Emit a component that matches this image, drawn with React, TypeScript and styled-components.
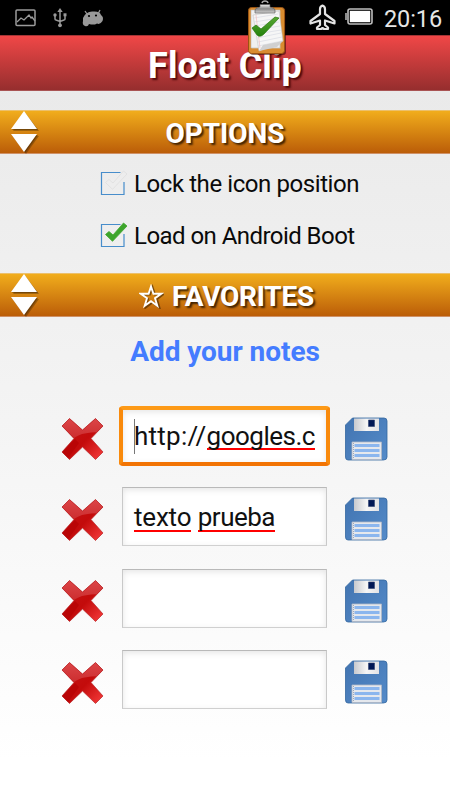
import React from 'react';
import styled, { createGlobalStyle } from 'styled-components';

const GlobalStyle = createGlobalStyle`
  * { box-sizing: border-box; }
  body { margin: 0; font-family: Roboto, "Liberation Sans", sans-serif; }
`;

const Screen = styled.div`
  width: 450px;
  height: 800px;
  display: flex;
  flex-direction: column;
  overflow: hidden;
  background: linear-gradient(#e9e9e9 0, #eaeaea 91px, #f4f4f4 420px, #ffffff 760px);
`;

const StatusBar = styled.header`
  height: 35px;
  flex: none;
  display: flex;
  align-items: flex-start;
  background: #000;
  position: relative;
  svg { flex: none; }
`;

const StatusIcon = styled.svg<{ $gap: number; $top: number }>`
  margin-left: ${p => p.$gap}px;
  margin-top: ${p => p.$top}px;
`;

const Clock = styled.time`
  margin-left: 10px;
  margin-top: 5px;
  font-size: 23.5px;
  line-height: 28px;
  letter-spacing: -0.1px;
  color: #e6e6e6;
  white-space: nowrap;
`;

const FloatingClip = styled.svg`
  position: absolute;
  left: 247px;
  top: 0;
  z-index: 2;
`;

const TitleBar = styled.div`
  height: 56px;
  flex: none;
  display: flex;
  justify-content: center;
  background: linear-gradient(#f04747, #962e2e);
  border-top: 1px solid #a33536;
  border-bottom: 1px solid #a95454;
`;

const Title = styled.h1`
  margin: 0;
  font-size: 36px;
  line-height: 60px;
  letter-spacing: 0.1px;
  color: #fff;
  text-shadow: 2px 2px 2px rgba(60, 0, 0, 0.85);
  white-space: nowrap;
`;

const SectionBar = styled.div<{ $gap: number }>`
  margin-top: ${p => p.$gap}px;
  height: 44px;
  flex: none;
  display: grid;
  grid-template-columns: 50px 350px 50px;
  background: linear-gradient(#f1ad1c, #bb5d08);
  border-top: 1px solid #ecc06c;
  border-bottom: 1px solid #cf9167;
`;

const SectionTitle = styled.h2<{ $spacing: number; $shift?: number }>`
  margin: 0;
  padding-left: ${p => p.$shift ?? 0}px;
  display: flex;
  justify-content: center;
  align-items: center;
  gap: 8px;
  font-size: 28px;
  line-height: 45px;
  letter-spacing: ${p => p.$spacing}px;
  color: #fff;
  text-shadow: 2px 2px 2px rgba(50, 25, 0, 0.9);
  white-space: nowrap;
`;

const OptionList = styled.div`
  height: 119px;
  flex: none;
  padding: 4px 0 0 100px;
  display: flex;
  flex-direction: column;
`;

const Option = styled.label`
  height: 52px;
  display: flex;
  align-items: center;
  gap: 5px;
  svg { margin-top: -4px; }
`;

const OptionText = styled.span<{ $spacing: number }>`
  font-size: 24px;
  line-height: 53px;
  letter-spacing: ${p => p.$spacing}px;
  color: #0a0a0a;
  white-space: nowrap;
`;

const NotesHeading = styled.h3`
  margin: 0;
  height: 89px;
  flex: none;
  text-align: center;
  font-size: 28px;
  line-height: 69px;
  letter-spacing: -0.05px;
  color: #447cff;
`;

const Notes = styled.div`
  display: flex;
  flex-direction: column;
  gap: 22.4px;
`;

const NoteRow = styled.div`
  height: 59px;
  display: grid;
  grid-template-columns: 43px 211px 45px;
  column-gap: 15px;
  align-items: center;
  padding-left: 61px;
  > svg { margin-top: 6px; }
  > svg:last-child { margin: 5px 0 0 -1px; }
`;

const NoteField = styled.div<{ $focused?: boolean }>`
  width: ${p => (p.$focused ? 211 : 205)}px;
  margin-left: ${p => (p.$focused ? 0 : 3)}px;
  height: ${p => (p.$focused ? 60 : 59)}px;
  padding-left: 11px;
  display: flex;
  align-items: center;
  border: ${p => (p.$focused ? '4px solid #f98a0c' : '1px solid #c9c9c9')};
  border-top-color: ${p => (p.$focused ? '#fd9a17' : '#b9b9b9')};
  border-bottom-color: ${p => (p.$focused ? '#f27404' : '#d0d0d0')};
  border-radius: ${p => (p.$focused ? 4 : 0)}px;
  background: #fff;
  box-shadow: inset 0 2px 6px rgba(0, 0, 0, 0.1);
  font-size: 26px;
  color: #111;
  white-space: pre;
  overflow: hidden;
`;

const Caret = styled.span`
  width: 1px;
  height: 35px;
  margin-right: -1px;
  background: #777;
  flex: none;
`;

const NoteText = styled.span<{ $spacing: number }>`
  letter-spacing: ${p => p.$spacing}px;
  line-height: 34px;
`;

const Misspelled = styled.span<{ $spacing: number; $drop: number }>`
  display: inline-block;
  height: 34px;
  letter-spacing: ${p => p.$spacing}px;
  background: linear-gradient(#f00, #f00) 0 ${p => p.$drop}px / 100% 2.4px no-repeat;
`;

const Sorter = () => (
  <svg width="50" height="43" viewBox="0 0 50 43">
    <g fill="#3a2204" opacity=".35">
      <path d="M26 3 39 20H13Z" /><path d="M13 25H39L26 43Z" />
    </g>
    <g fill="#4a2a04" opacity=".5">
      <path d="M25 2 38 19H12Z" /><path d="M12 24H38L25 42Z" />
    </g>
    <path d="M24 0 37 18H11Z M11 23H37L24 41Z" fill="#fff" />
  </svg>
);

const Check = ({ on }: { on?: boolean }) => (
  <svg width="29" height="30" viewBox="0 0 29 30">
    <path d="M20.500 5.500H1.500V27.500H24V15" fill="none" stroke="#478dcb" strokeWidth="1.200" />
    <path
      d="M5.500 15.500 9 12.500 13 16 23.500 4 27 7 12.500 22.300Z"
      fill={on ? '#3da52c' : '#ededed'}
      stroke={on ? '#3da52c' : '#dedede'}
      strokeWidth=".8"
    />
  </svg>
);

const crossOutline =
  'M8.500 1.500 21.500 13 34.500 1.500 42 9 30 21.500 42 35 34.500 42.500 21.500 30 8.500 42.500 1 35 13 21.500 1 9Z';

const Cross = () => (
  <svg width="43" height="44" viewBox="0 0 43 44">
    <defs>
      <linearGradient id="crossBase" x1="0" y1="0" x2="1" y2="1">
        <stop offset="0" stopColor="#c51618" /><stop offset=".55" stopColor="#c30b0b" /><stop offset="1" stopColor="#fb4141" />
      </linearGradient>
      <linearGradient id="crossShine" x1="0" y1="0" x2="0" y2="1">
        <stop offset="0" stopColor="#dd4749" /><stop offset="1" stopColor="#c9292b" />
      </linearGradient>
      <clipPath id="crossShape"><path d={crossOutline} /></clipPath>
    </defs>
    <g clipPath="url(#crossShape)">
      <path d="M0 0H43V44H0Z" fill="url(#crossBase)" />
      <path d="M0 0H43V15Q29 15 21 17 12 20 10 25L0 18Z" fill="url(#crossShine)" />
      <path d="M0 36 14 22 18 26 5 44Z" fill="#b90506" />
    </g>
    <path d={crossOutline} fill="none" stroke="#b82426" strokeWidth=".7" />
  </svg>
);

const Floppy = () => (
  <svg width="45" height="44" viewBox="0 0 45 44">
    <defs>
      <linearGradient id="diskBody" x1="0" y1="0" x2="1" y2="1">
        <stop offset="0" stopColor="#4274b1" /><stop offset="1" stopColor="#548bc9" />
      </linearGradient>
      <linearGradient id="diskMetal" x1="0" y1="0" x2="1" y2="0">
        <stop offset="0" stopColor="#c7c9ce" /><stop offset=".5" stopColor="#f5f5f5" /><stop offset="1" stopColor="#e2e2e5" />
      </linearGradient>
    </defs>
    <path d="M8.500 1H40Q43 1 43 4V40Q43 43 39.500 43H4Q1.500 43 1.500 40V8Z" fill="url(#diskBody)" stroke="#34679f" strokeWidth=".8" />
    <path d="M10 1.500H35V14H10Z" fill="url(#diskMetal)" />
    <path d="M24.500 3H30.500V9.500H24.500Z" fill="#001755" stroke="#2d416f" strokeWidth=".6" />
    <path d="M8 25H37.500V42.500H8Z" fill="#e5e8ed" stroke="#b0b8c5" strokeWidth=".8" />
    <path d="M10.500 28.500H35.500M10.500 33.500H35.500M10.500 38.500H35.500" stroke="#8bb6ee" strokeWidth="2.800" />
    <path d="M9.500 26V42" stroke="#9da7b8" strokeDasharray="1 1" />
  </svg>
);

const Star = () => (
  <svg width="25" height="25" viewBox="0 0 25 25">
    <path d="M13.500 3 16 10.500H24L18 15.200 20.400 23.500 13.500 18.500 6.700 23.500 9 15.200 3 10.500H11Z" fill="none" stroke="#4a2a04" strokeWidth="2" opacity=".65" />
    <path d="M12 2.500 14.400 9.700H22.300L16 14.200 18.300 21.800 12 17.200 5.700 21.800 8 14.200 1.700 9.700H9.600Z" fill="none" stroke="#fff" strokeWidth="1.900" />
  </svg>
);

const Clipboard = () => (
  <FloatingClip width="40" height="56" viewBox="0 0 40 56">
    <defs>
      <linearGradient id="clipMetal" x1="0" y1="0" x2="0" y2="1">
        <stop offset="0" stopColor="#efefef" /><stop offset=".5" stopColor="#888" /><stop offset="1" stopColor="#d2d2d2" />
      </linearGradient>
      <linearGradient id="tick" x1="0" y1="0" x2="0" y2="1">
        <stop offset="0" stopColor="#58a833" /><stop offset="1" stopColor="#23820c" />
      </linearGradient>
    </defs>
    <rect x="3" y="8" width="36" height="47" rx="3" fill="#200" opacity=".5" />
    <rect x="1.500" y="7.500" width="36" height="46" rx="3" fill="#d98c30" stroke="#9a5412" />
    <path d="M5 11H34V49H5Z" fill="#df9c48" />
    <path d="M4 10H33V48H4Z" fill="#f0f0f0" stroke="#bbb" strokeWidth=".6" />
    <path d="M6 15 32 11 36 41 12 51Z" fill="#f6f6f6" stroke="#c5c5c5" strokeWidth=".6" />
    <path d="M7 18 31 14M7 22 32 18M8 26 32 22M8 30 33 26M9 34 34 30M10 38 34 33M11 42 35 37M11 46 35 41" stroke="#dcdee6" strokeWidth=".8" />
    <path d="M9 15 13 48" stroke="#efbcbe" strokeWidth=".7" />
    <path d="M12 51 16 45 36 41 30 47Z" fill="#d0d0d0" />
    <path d="M8 13V10Q8 8 13 7V4.500H23V7Q28 8 28 10V13Z" fill="url(#clipMetal)" stroke="#555" strokeWidth=".6" />
    <path d="M15 3Q15.500 1 18 1T21 3" fill="none" stroke="#aaa" strokeWidth="1.600" />
    <path d="M5 28 9 25 14 29 28 17 32 18 17 34Q13 38 10 35Z" fill="url(#tick)" stroke="#27750e" strokeWidth=".7" />
  </FloatingClip>
);

const App = () => (
  <>
    <GlobalStyle />
    <Screen>
      <StatusBar>
        <StatusIcon $gap={15} $top={9} width="21" height="18" viewBox="0 0 21 18">
          <rect x="1" y="1" width="19" height="15.500" rx="1" fill="none" stroke="#9b9b9b" strokeWidth="1.500" />
          <path d="M2 13 6 9 9 11 14 6 16 9 17 8 20 12" fill="none" stroke="#9b9b9b" strokeWidth="1.300" />
        </StatusIcon>
        <StatusIcon $gap={17} $top={8} width="15" height="20" viewBox="0 0 15 20">
          <path d="M7 2V17M2 7V11Q2 12 3 12L7 13.500 11 12Q12 12 12 11V7" fill="none" stroke="#999" strokeWidth="1.500" />
          <path d="M7 0 9.700 4H4.300Z" fill="#999" />
          <circle cx="7" cy="17.300" r="1.900" fill="#999" /><circle cx="2" cy="7" r="1.700" fill="#999" /><path d="M10.500 5.300H13.500V8.300H10.500Z" fill="#999" />
        </StatusIcon>
        <StatusIcon $gap={14} $top={9} width="22" height="18" viewBox="0 0 22 18">
          <path d="M3 2 5 5M18 1 16 5" stroke="#999" strokeWidth="1.300" />
          <path d="M1 9Q4 2 11 2.500 18 2 19 6 22 8 20.500 12 18 16 15 14.500L13 15.500H9L7 15Q6 18 3 17 0 16 1 12Z" fill="#999" />
          <circle cx="7" cy="7" r="1.100" /><circle cx="14" cy="6.500" r="1.100" />
        </StatusIcon>
        <StatusIcon $gap={205} $top={4} width="28" height="27" viewBox="0 0 28 27">
          <path d="M13.500 1.500Q16 2.500 16 5V10L25.500 17V19.500L16 16.500V21L19 23.500V25H15L13.500 24 12 25H8V23.500L11 21V16.500L1.500 19.500V17L11 10V5Q11 2.500 13.500 1.500Z" fill="#000" stroke="#e4e4e4" strokeWidth="2.200" strokeLinejoin="round" />
        </StatusIcon>
        <StatusIcon $gap={8} $top={8} width="29" height="17" viewBox="0 0 29 17">
          <rect x="3" y="1" width="24" height="15" rx="2" fill="none" stroke="#bdbdbd" strokeWidth="1.600" />
          <rect x="4.800" y="2.800" width="20.400" height="11.400" fill="#fff" />
          <path d="M1 5V12" stroke="#bbb" strokeWidth="1.500" />
        </StatusIcon>
        <Clock>20:16</Clock>
        <Clipboard />
      </StatusBar>
      <TitleBar><Title>Float Clip</Title></TitleBar>
      <SectionBar $gap={19}><Sorter /><SectionTitle $spacing={0}>OPTIONS</SectionTitle></SectionBar>
      <OptionList>
        <Option><Check /><OptionText $spacing={-0.42}>Lock the icon position</OptionText></Option>
        <Option><Check on /><OptionText $spacing={-0.55}>Load on Android Boot</OptionText></Option>
      </OptionList>
      <SectionBar $gap={0}><Sorter /><SectionTitle $spacing={-0.25} $shift={3}><Star />FAVORITES</SectionTitle></SectionBar>
      <NotesHeading>Add your notes</NotesHeading>
      <Notes>
        <NoteRow>
          <Cross />
          <NoteField $focused><Caret /><NoteText $spacing={0.25}>http://<Misspelled $spacing={-0.5} $drop={29}>googles.c</Misspelled></NoteText></NoteField>
          <Floppy />
        </NoteRow>
        <NoteRow>
          <Cross />
          <NoteField><NoteText $spacing={0}><Misspelled $spacing={-0.2} $drop={30}>texto</Misspelled> <Misspelled $spacing={-0.5} $drop={30}>prueba</Misspelled></NoteText></NoteField>
          <Floppy />
        </NoteRow>
        <NoteRow><Cross /><NoteField /><Floppy /></NoteRow>
        <NoteRow><Cross /><NoteField /><Floppy /></NoteRow>
      </Notes>
    </Screen>
  </>
);

export default App;
